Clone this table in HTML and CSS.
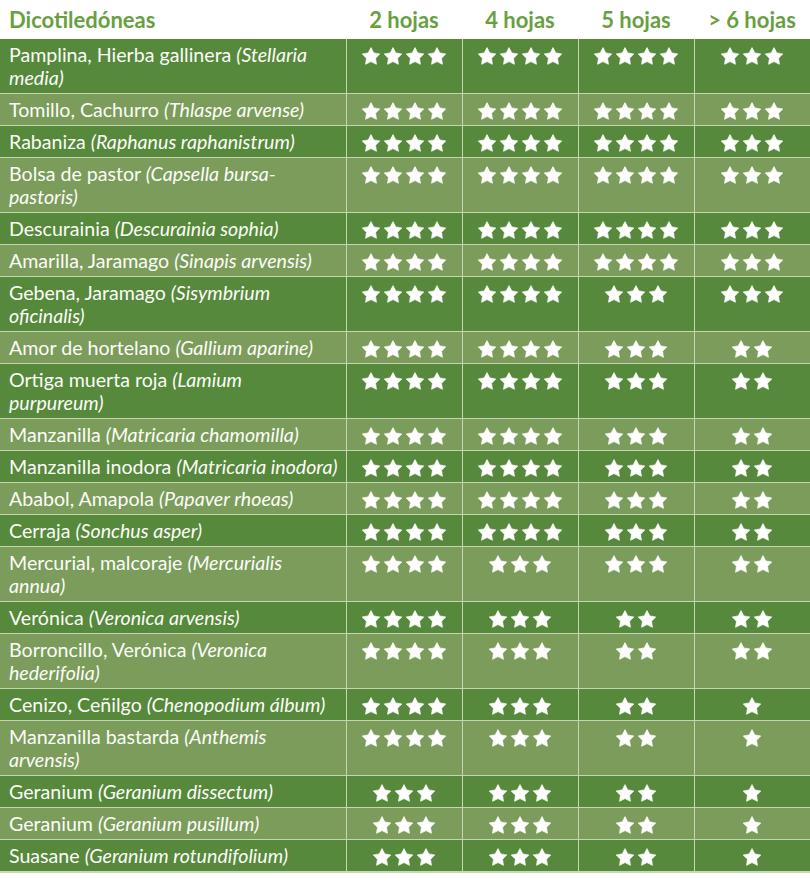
FILE: index.html
```html
<!DOCTYPE html>
<html lang="es">
<head>
<meta charset="utf-8">
<title>Dicotiledóneas</title>
<link rel="stylesheet" href="styles.css">
</head>
<body>
<svg class="defs" width="0" height="0" aria-hidden="true">
  <defs>
    <path id="st" d="M9 0.6 L11.82 5.95 L17.8 6.95 L13.55 11.3 L14.45 17.3 L9 14.6 L3.55 17.3 L4.45 11.3 L0.2 6.95 L6.18 5.95Z"/>
    <symbol id="s1" viewBox="0 0 18 18"><use href="#st"/></symbol>
    <symbol id="s2" viewBox="0 0 40 18"><use href="#st"/><use href="#st" x="22"/></symbol>
    <symbol id="s3" viewBox="0 0 62 18"><use href="#st"/><use href="#st" x="22"/><use href="#st" x="44"/></symbol>
    <symbol id="s4" viewBox="0 0 84 18"><use href="#st"/><use href="#st" x="22"/><use href="#st" x="44"/><use href="#st" x="66"/></symbol>
  </defs>
</svg>
<table class="tbl">
  <colgroup><col class="c-name"><col class="c-val"><col class="c-val"><col class="c-val"><col class="c-val"></colgroup>
  <thead>
    <tr><th class="h-name">Dicotiledóneas</th><th>2 hojas</th><th>4 hojas</th><th>5 hojas</th><th>&gt; 6 hojas</th></tr>
  </thead>
  <tbody>
    <tr class="dk"><td class="nm">Pamplina, Hierba gallinera <i>(Stellaria<br>media)</i></td><td><svg class="w4"><use href="#s4"/></svg></td><td><svg class="w4"><use href="#s4"/></svg></td><td><svg class="w4"><use href="#s4"/></svg></td><td><svg class="w3"><use href="#s3"/></svg></td></tr>
    <tr class="lt"><td class="nm">Tomillo, Cachurro <i>(Thlaspe arvense)</i></td><td><svg class="w4"><use href="#s4"/></svg></td><td><svg class="w4"><use href="#s4"/></svg></td><td><svg class="w4"><use href="#s4"/></svg></td><td><svg class="w3"><use href="#s3"/></svg></td></tr>
    <tr class="dk"><td class="nm">Rabaniza <i>(Raphanus raphanistrum)</i></td><td><svg class="w4"><use href="#s4"/></svg></td><td><svg class="w4"><use href="#s4"/></svg></td><td><svg class="w4"><use href="#s4"/></svg></td><td><svg class="w3"><use href="#s3"/></svg></td></tr>
    <tr class="lt"><td class="nm">Bolsa de pastor <i>(Capsella bursa-<br>pastoris)</i></td><td><svg class="w4"><use href="#s4"/></svg></td><td><svg class="w4"><use href="#s4"/></svg></td><td><svg class="w4"><use href="#s4"/></svg></td><td><svg class="w3"><use href="#s3"/></svg></td></tr>
    <tr class="dk"><td class="nm">Descurainia <i>(Descurainia sophia)</i></td><td><svg class="w4"><use href="#s4"/></svg></td><td><svg class="w4"><use href="#s4"/></svg></td><td><svg class="w4"><use href="#s4"/></svg></td><td><svg class="w3"><use href="#s3"/></svg></td></tr>
    <tr class="lt"><td class="nm">Amarilla, Jaramago <i>(Sinapis arvensis)</i></td><td><svg class="w4"><use href="#s4"/></svg></td><td><svg class="w4"><use href="#s4"/></svg></td><td><svg class="w4"><use href="#s4"/></svg></td><td><svg class="w3"><use href="#s3"/></svg></td></tr>
    <tr class="dk"><td class="nm">Gebena, Jaramago <i>(Sisymbrium<br>oficinalis)</i></td><td><svg class="w4"><use href="#s4"/></svg></td><td><svg class="w4"><use href="#s4"/></svg></td><td><svg class="w3"><use href="#s3"/></svg></td><td><svg class="w3"><use href="#s3"/></svg></td></tr>
    <tr class="lt"><td class="nm">Amor de hortelano <i>(Gallium aparine)</i></td><td><svg class="w4"><use href="#s4"/></svg></td><td><svg class="w4"><use href="#s4"/></svg></td><td><svg class="w3"><use href="#s3"/></svg></td><td><svg class="w2"><use href="#s2"/></svg></td></tr>
    <tr class="dk"><td class="nm">Ortiga muerta roja <i>(Lamium<br>purpureum)</i></td><td><svg class="w4"><use href="#s4"/></svg></td><td><svg class="w4"><use href="#s4"/></svg></td><td><svg class="w3"><use href="#s3"/></svg></td><td><svg class="w2"><use href="#s2"/></svg></td></tr>
    <tr class="lt"><td class="nm">Manzanilla <i>(Matricaria chamomilla)</i></td><td><svg class="w4"><use href="#s4"/></svg></td><td><svg class="w4"><use href="#s4"/></svg></td><td><svg class="w3"><use href="#s3"/></svg></td><td><svg class="w2"><use href="#s2"/></svg></td></tr>
    <tr class="dk"><td class="nm">Manzanilla inodora <i>(Matricaria inodora)</i></td><td><svg class="w4"><use href="#s4"/></svg></td><td><svg class="w4"><use href="#s4"/></svg></td><td><svg class="w3"><use href="#s3"/></svg></td><td><svg class="w2"><use href="#s2"/></svg></td></tr>
    <tr class="lt"><td class="nm">Ababol, Amapola <i>(Papaver rhoeas)</i></td><td><svg class="w4"><use href="#s4"/></svg></td><td><svg class="w4"><use href="#s4"/></svg></td><td><svg class="w3"><use href="#s3"/></svg></td><td><svg class="w2"><use href="#s2"/></svg></td></tr>
    <tr class="dk"><td class="nm">Cerraja <i>(Sonchus asper)</i></td><td><svg class="w4"><use href="#s4"/></svg></td><td><svg class="w4"><use href="#s4"/></svg></td><td><svg class="w3"><use href="#s3"/></svg></td><td><svg class="w2"><use href="#s2"/></svg></td></tr>
    <tr class="lt"><td class="nm">Mercurial, malcoraje <i>(Mercurialis<br>annua)</i></td><td><svg class="w4"><use href="#s4"/></svg></td><td><svg class="w3"><use href="#s3"/></svg></td><td><svg class="w3"><use href="#s3"/></svg></td><td><svg class="w2"><use href="#s2"/></svg></td></tr>
    <tr class="dk"><td class="nm">Verónica <i>(Veronica arvensis)</i></td><td><svg class="w4"><use href="#s4"/></svg></td><td><svg class="w3"><use href="#s3"/></svg></td><td><svg class="w2"><use href="#s2"/></svg></td><td><svg class="w2"><use href="#s2"/></svg></td></tr>
    <tr class="lt"><td class="nm">Borroncillo, Verónica <i>(Veronica<br>hederifolia)</i></td><td><svg class="w4"><use href="#s4"/></svg></td><td><svg class="w3"><use href="#s3"/></svg></td><td><svg class="w2"><use href="#s2"/></svg></td><td><svg class="w2"><use href="#s2"/></svg></td></tr>
    <tr class="dk"><td class="nm">Cenizo, Ceñilgo <i>(Chenopodium álbum)</i></td><td><svg class="w4"><use href="#s4"/></svg></td><td><svg class="w3"><use href="#s3"/></svg></td><td><svg class="w2"><use href="#s2"/></svg></td><td><svg class="w1"><use href="#s1"/></svg></td></tr>
    <tr class="lt"><td class="nm">Manzanilla bastarda <i>(Anthemis<br>arvensis)</i></td><td><svg class="w4"><use href="#s4"/></svg></td><td><svg class="w3"><use href="#s3"/></svg></td><td><svg class="w2"><use href="#s2"/></svg></td><td><svg class="w1"><use href="#s1"/></svg></td></tr>
    <tr class="dk"><td class="nm">Geranium <i>(Geranium dissectum)</i></td><td><svg class="w3"><use href="#s3"/></svg></td><td><svg class="w3"><use href="#s3"/></svg></td><td><svg class="w2"><use href="#s2"/></svg></td><td><svg class="w1"><use href="#s1"/></svg></td></tr>
    <tr class="lt"><td class="nm">Geranium <i>(Geranium pusillum)</i></td><td><svg class="w3"><use href="#s3"/></svg></td><td><svg class="w3"><use href="#s3"/></svg></td><td><svg class="w2"><use href="#s2"/></svg></td><td><svg class="w1"><use href="#s1"/></svg></td></tr>
    <tr class="dk"><td class="nm">Suasane <i>(Geranium rotundifolium)</i></td><td><svg class="w3"><use href="#s3"/></svg></td><td><svg class="w3"><use href="#s3"/></svg></td><td><svg class="w2"><use href="#s2"/></svg></td><td><svg class="w1"><use href="#s1"/></svg></td></tr>
  </tbody>
</table>
</body>
</html>
```
FILE: styles.css
```css
html, body {
  margin: 0;
  padding: 0;
  background: #ffffff;
}
body {
  font-family: "Lato", "Open Sans", sans-serif;
  width: 810px;
}
.defs {
  position: absolute;
  width: 0;
  height: 0;
  overflow: hidden;
}
.tbl {
  width: 810px;
  border-collapse: collapse;
  table-layout: fixed;
  border-bottom: 2px solid #c9d8b6;
}
.c-name { width: 346px; }
.c-val { width: 116px; }
.tbl th {
  height: 39px;
  padding: 0;
  font-size: 22px;
  font-weight: 700;
  color: #68a03f;
  text-align: center;
  vertical-align: middle;
  line-height: 24px;
}
.tbl th.h-name {
  text-align: left;
  padding-left: 9px;
}
.tbl td {
  padding: 8px 0 0 0;
  border-left: 1px solid #c5d6b0;
  border-top: 1px solid #c5d6b0;
  vertical-align: top;
  text-align: center;
  color: #ffffff;
}
.tbl tbody tr:first-child td {
  border-top: none;
}
.tbl td:first-child {
  border-left: none;
}
.tbl td.nm {
  padding: 4px 4px 4px 9px;
  text-align: left;
  font-size: 19.6px;
  line-height: 23px;
  color: #fbfcf8;
}
.nm i {
  font-style: italic;
}
.dk td { background: #56893b; }
.lt td { background: #7b9c5b; }
.tbl td svg {
  display: block;
  margin: 0 auto;
  height: 18px;
  fill: #ffffff;
  stroke: #ffffff;
  stroke-width: 0.7px;
  stroke-linejoin: round;
  overflow: visible;
}
.w1 { width: 18px; }
.w2 { width: 40px; }
.w3 { width: 62px; }
.w4 { width: 84px; }
```
